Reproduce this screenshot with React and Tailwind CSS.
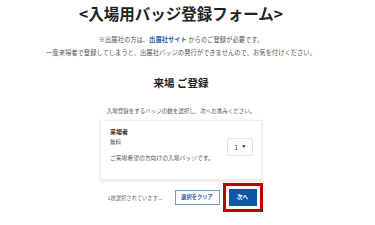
export default function App() {
  const jp = { fontFamily: '"Noto Sans CJK JP", "Noto Sans", sans-serif' };
  return (
    <div className="w-[375px] h-[225px] bg-white overflow-hidden" style={jp}>
      <div className="w-[362px] flex flex-col items-center">
        <h1 className="pt-[3px] text-[15.5px] leading-[20px] font-bold text-[#222] tracking-[0px]">
          &lt;入場用バッジ登録フォーム&gt;
        </h1>
        <div className="mt-[10px] text-[6.3px] leading-[13px] text-[#555] text-center">
          <p>
            ※出展社の方は、<span className="font-bold text-[#1f5ea8]">出展社サイト</span> からのご登録が必要です。
          </p>
          <p>一度来場者で登録してしまうと、出展社バッジの発行ができませんので、お気を付けください。</p>
        </div>
        <h2 className="mt-[17px] text-[10.5px] leading-[14px] font-bold text-[#222]">来場 ご登録</h2>
        <p className="mt-[17px] text-[5.5px] leading-[8px] text-[#555]">
          入場登録をするバッジの数を選択し、次へお進みください。
        </p>
        <div className="mt-[5px] w-[162px] h-[60px] bg-white border border-[#eeeeee] shadow-[0_1px_3px_rgba(0,0,0,0.12)] flex items-start justify-between">
          <div className="pl-[9px] pt-[7px] flex flex-col">
            <span className="text-[6px] leading-[8px] font-bold text-[#333]">来場者</span>
            <span className="mt-[2px] text-[5.5px] leading-[8px] text-[#555]">無料</span>
            <span className="mt-[8px] text-[5.8px] leading-[8px] text-[#555]">ご来場希望の方向けの入場バッジです。</span>
          </div>
          <div className="mt-[17px] mr-[8px] w-[26px] h-[18px] border border-[#e5e5e5] rounded-[2px] flex items-center justify-center gap-[4px] text-[6px] text-[#333]">
            <span>1</span>
            <span className="text-[3.5px]">▼</span>
          </div>
        </div>
        <div className="mt-[3px] w-[163px] flex items-center pl-[8px]">
          <span className="w-[59px] text-[5.3px] leading-[8px] text-[#666] whitespace-nowrap">1枚選択されています...</span>
          <div className="ml-[8px] w-[45px] h-[15px] border border-[#6a9fd8] flex items-center justify-center text-[5.3px] font-bold text-[#2a62a8]">
            選択をクリア
          </div>
          <div className="ml-[3px] border-[3px] border-[#c00000] p-[3px] flex">
            <div className="w-[28px] h-[17px] bg-[#0d58a6] flex items-center justify-center text-[5.5px] font-bold text-white">
              次へ
            </div>
          </div>
        </div>
      </div>
    </div>
  );
}
